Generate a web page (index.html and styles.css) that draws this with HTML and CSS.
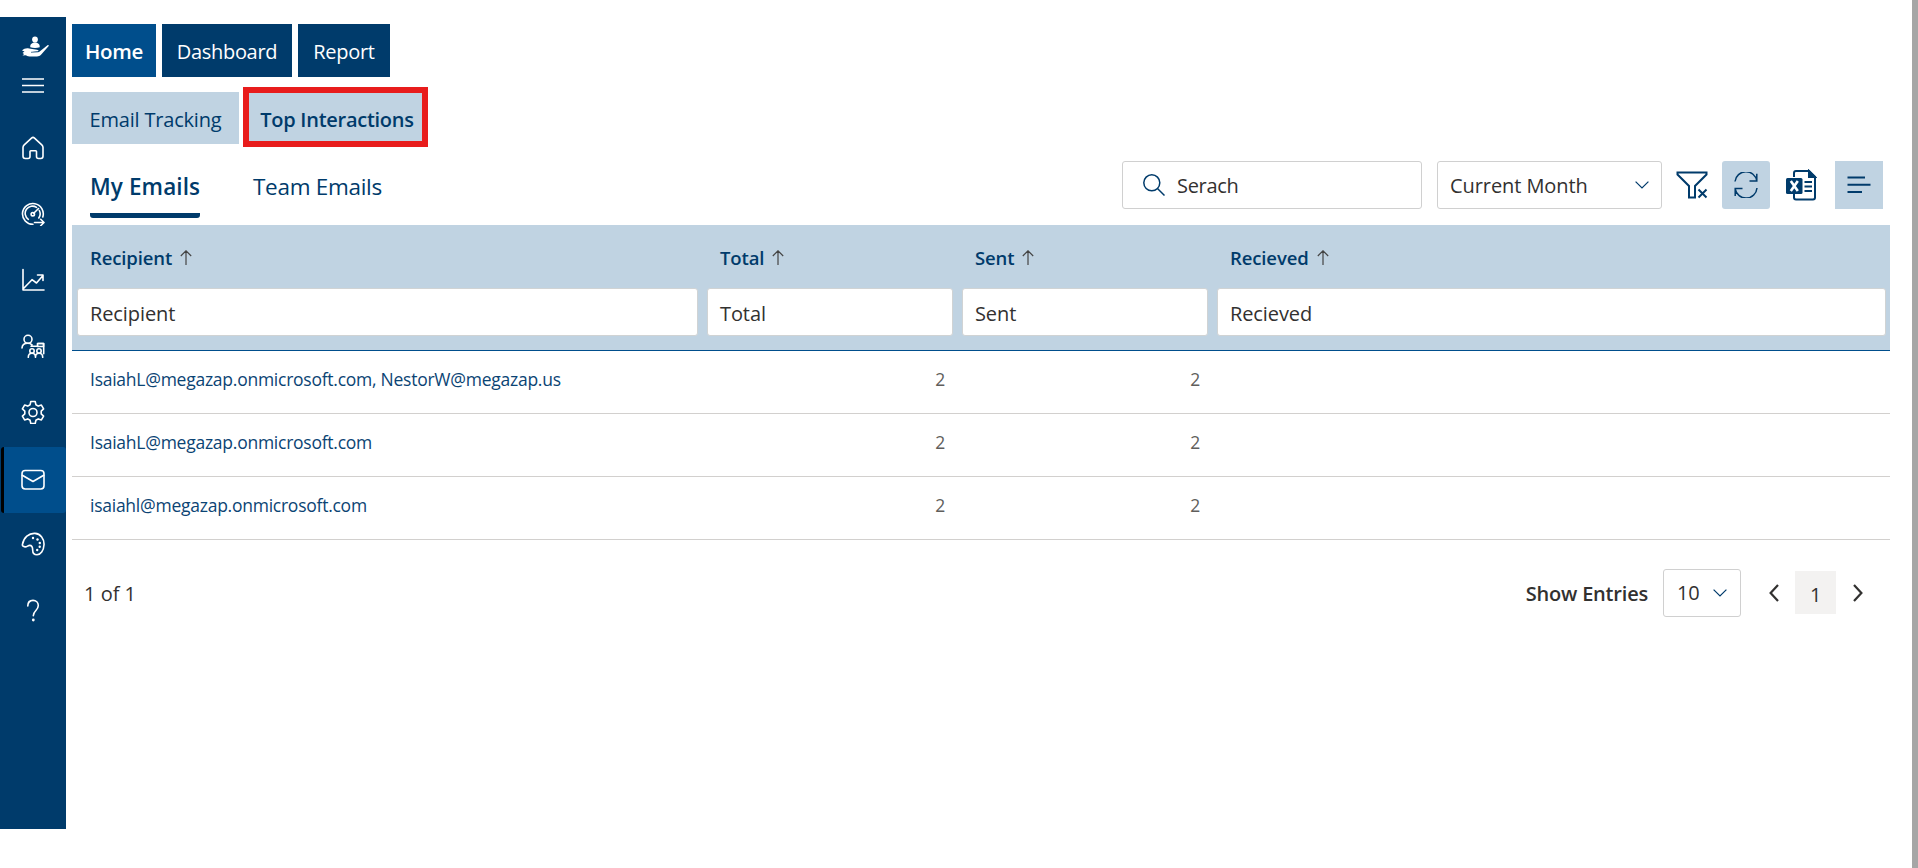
FILE: index.html
```
<!DOCTYPE html>
<html lang="en">
<head>
<meta charset="utf-8">
<title>Top Interactions</title>
<link rel="stylesheet" href="styles.css">
</head>
<body>
<div class="app">
  <aside class="sidebar">
    <div class="logo">
      <svg width="28" height="22" viewBox="0 0 28 22" fill="#fff"><circle cx="14" cy="3.500" r="2.900"/><path d="M9.300 11.200c-.4-3 2-4.600 4.700-4.600s5.100 1.600 4.700 4.600q-4.700 1.400-9.400 0z"/><path d="M1 14.500c2-1.700 4.500-2.600 7-1.900l8 1.100c2 .3 2.100 1.600 0 1.900l-5 .4 7 .1 8.500-6.800c1-.6 1.700.1 1 1L20 18.800c-1 1-2.400 1.600-4 1.600H8.500c-2.200 0-2.600-1-4-1.200L1.500 19.500c2-1.500 1.500-2 0-2.500l2-1.500z"/><path d="M10 16.300l7.500-.5" stroke="#003b6b" stroke-width=".7" fill="none"/></svg>
    </div>
    <button class="menu" aria-label="Menu"><svg width="22" height="15" viewBox="0 0 22 15" stroke="#fff" stroke-width="1.500"><path d="M0 1h22M0 7.500h22M0 14h22"/></svg></button>
    <nav class="nav">
      <a class="nav-item"><svg class="icon" viewBox="0 0 24 24"><path d="M10.500 2.100a2.200 2.200 0 0 1 3 0l7.300 6.800q1.200 1.100 1.200 2.700v8.700q0 2.200-2.200 2.200h-2.300q-2 0-2-2v-5q0-.8-.8-.8H9.800q-.8 0-.8.8v5q0 2-2 2H4.200Q2 22.500 2 20.300v-8.700q0-1.600 1.200-2.700z"/></svg></a>
      <a class="nav-item"><svg class="icon" viewBox="0 0 24 24"><path d="M12 22.300A10.400 10.400 0 1 1 21.800 15M7.300 17.300A7.200 7.200 0 1 1 15.500 5.400M18.300 8.500a7.200 7.200 0 0 1-.5 7.500M17.500 6.500l-5 5"/><circle cx="11.800" cy="12.200" r="1.700"/><path d="M13.500 20.500h9.200M19.700 17.300l3.300 3.200-3.300 3.200"/></svg></a>
      <a class="nav-item"><svg class="icon" viewBox="0 0 24 24"><path d="M2 1.500V22h21M2.500 20.500l8.500-8.800 4.500 3.300L22 7.500M16.500 7H22v5.500"/></svg></a>
      <a class="nav-item"><svg class="icon" viewBox="0 0 24 24"><circle cx="7" cy="5.300" r="4"/><path d="M1 14c.2-3 2.600-4.700 5.800-4.700 1.800 0 3.200.6 4.200 1.600M10 12.200h7M17 9.500h5.700v10.300"/><rect x="16.500" y="9.500" width="6" height="3"/><circle cx="11" cy="17" r="2.200"/><circle cx="18" cy="17" r="2.200"/><path d="M7.300 23.300c0-2.800 1.600-4 3.700-4s3.500 1.300 3.500 4c0-2.700 1.500-4 3.500-4s3.700 1.200 3.700 4"/></svg></a>
      <a class="nav-item"><svg class="icon" viewBox="0 0 24 24"><path d="M9.800 1.500h4.400l.7 3.200 2.400 1.400 3.100-1 2.200 3.800-2.400 2.200v2.800l2.400 2.200-2.200 3.800-3.100-1-2.400 1.400-.7 3.200H9.800l-.7-3.200-2.400-1.400-3.100 1-2.200-3.800 2.400-2.200v-2.800L1.400 8.900l2.200-3.800 3.100 1 2.400-1.400z"/><circle cx="12" cy="12.500" r="4"/></svg></a>
      <a class="nav-item nav-item-active"><svg class="icon" viewBox="0 0 24 24"><rect x="1" y="2.500" width="22" height="18.500" rx="3.200"/><path d="M1.300 7.300L12 13.500l10.700-6.200"/></svg></a>
      <a class="nav-item"><svg class="icon" viewBox="0 0 24 24"><path d="M1.400 12.700C2.500 5.500 8 1 14 1.400c5.500.4 9.300 5.200 9 11.400-.3 6-3.500 10-7 10-3.300 0-4.300-2-4.300-4.600 0-3-.7-4.800-3-4.800-1.800 0-2.700 1.700-4.700 1.500-1.700-.1-2.700-1-2.600-2.200z"/><g fill="#fff" stroke="none"><circle cx="12" cy="6" r="1.200"/><circle cx="16.500" cy="7.500" r="1.200"/><circle cx="18.800" cy="11" r="1.200"/><circle cx="18.700" cy="14.800" r="1.200"/><circle cx="16.200" cy="18" r="1.200"/></g></svg></a>
      <a class="nav-item"><svg class="icon" viewBox="0 0 24 24"><path d="M6.800 8C6.800 4.500 9 2.400 12 2.400s5.300 2 5.300 5.200c0 4.800-5 5-5 10.200"/><circle cx="12.300" cy="22" r="1.400" fill="#fff" stroke="none"/></svg></a>
    </nav>
  </aside>

  <main class="main">
    <nav class="tabs">
      <a class="tab tab-home">Home</a>
      <a class="tab tab-dashboard">Dashboard</a>
      <a class="tab tab-report">Report</a>
    </nav>

    <nav class="subtabs">
      <a class="subtab subtab-tracking">Email Tracking</a>
      <a class="subtab subtab-top">Top Interactions</a>
    </nav>

    <div class="toolbar">
      <div class="views">
        <a class="view view-active">My Emails</a>
        <a class="view">Team Emails</a>
      </div>
      <div class="tools">
        <label class="search">
          <svg width="22" height="22" viewBox="0 0 22 22" class="line"><circle cx="8.800" cy="8.800" r="8"/><path d="M14.500 14.500l7 7"/></svg>
          <span class="placeholder">Serach</span>
        </label>
        <div class="select month"><span>Current Month</span><svg width="14" height="8" viewBox="0 0 14 8" class="line chevron"><path d="M.6.600L7 7 13.400.6"/></svg></div>
        <button class="tool clear" aria-label="Clear filter"><svg width="32" height="28" viewBox="0 0 32 28" fill="none" stroke="#003b6b" stroke-width="2"><path d="M1.500 1.500h29v2L19 15v11.500h-6V15L1.500 3.500z"/><path d="M22.500 18.500l8 8M30.500 18.500l-8 8"/></svg></button>
        <button class="tool tinted rounded" aria-label="Refresh"><svg width="26" height="26" viewBox="0 0 26 26" class="line"><path d="M2 9.500A11 11 0 0 1 23.800 9M23.800 1.800V9h-7.300M24 16A11 11 0 0 1 2.200 17M2.200 24v-7.500h7.300"/></svg></button>
        <button class="tool excel" aria-label="Export to Excel"><svg width="32" height="32" viewBox="0 0 32 32" fill="none" stroke="#003b6b" stroke-width="2"><path d="M9 8V4q0-2 2-2h13l6 6v20.500q0 2-2 2H11q-2 0-2-2V25M24 2v6h6"/><path d="M24 2l6 6h-6z" fill="#003b6b"/><path d="M19.500 13H27M19.500 17.500H27M19.500 22H27"/><rect x="1" y="9" width="16.500" height="16" rx="1.500" fill="#003b6b" stroke="none"/><path d="M5.800 12l7 10M12.800 12l-7 10" stroke="#fff" stroke-width="2.600"/></svg></button>
        <button class="tool tinted" aria-label="List view"><svg width="24" height="18" viewBox="0 0 24 18" class="line bars"><path d="M.5 1.500h17.500M.5 8.700h23M.5 15.900h14.500"/></svg></button>
      </div>
    </div>

    <table class="grid">
      <colgroup><col class="col-recipient"><col class="col-count"><col class="col-count"><col></colgroup>
      <thead>
        <tr class="titles">
          <th><div class="title">Recipient<svg class="sort" viewBox="0 0 12 15"><path d="M6 15V1M.8 6L6 .8 11.200 6"/></svg></div></th>
          <th><div class="title">Total<svg class="sort" viewBox="0 0 12 15"><path d="M6 15V1M.8 6L6 .8 11.200 6"/></svg></div></th>
          <th><div class="title">Sent<svg class="sort" viewBox="0 0 12 15"><path d="M6 15V1M.8 6L6 .8 11.200 6"/></svg></div></th>
          <th><div class="title">Recieved<svg class="sort" viewBox="0 0 12 15"><path d="M6 15V1M.8 6L6 .8 11.200 6"/></svg></div></th>
        </tr>
        <tr class="filters">
          <th><div class="filter">Recipient</div></th>
          <th><div class="filter">Total</div></th>
          <th><div class="filter">Sent</div></th>
          <th><div class="filter">Recieved</div></th>
        </tr>
      </thead>
      <tbody>
        <tr><td>IsaiahL@megazap.onmicrosoft.com, NestorW@megazap.us</td><td class="num">2</td><td class="num">2</td><td></td></tr>
        <tr><td>IsaiahL@megazap.onmicrosoft.com</td><td class="num">2</td><td class="num">2</td><td></td></tr>
        <tr><td>isaiahl@megazap.onmicrosoft.com</td><td class="num">2</td><td class="num">2</td><td></td></tr>
      </tbody>
    </table>

    <footer class="pager">
      <span class="count">1 of 1</span>
      <div class="paging">
        <span class="entries">Show Entries</span>
        <div class="select size"><span>10</span><svg width="14" height="8" viewBox="0 0 14 8" class="line chevron"><path d="M.6.600L7 7 13.400.6"/></svg></div>
        <svg class="arrow" viewBox="0 0 10 18"><path d="M9 1L1.600 9 9 17"/></svg>
        <span class="page">1</span>
        <svg class="arrow" viewBox="0 0 10 18"><path d="M1 1l7.400 8L1 17"/></svg>
      </div>
    </footer>
  </main>
  <div class="edge"></div>
</div>
</body>
</html>
```
FILE: styles.css
```
* { box-sizing: border-box; }

body {
  margin: 0;
  background: #fff;
  color: #323130;
  font: 20px/28px "Open Sans", "Noto Sans", sans-serif;
  letter-spacing: -0.2px;
}

button { border: 0; padding: 0; background: none; }

.app { display: flex; height: 868px; overflow: hidden; }

/* Sidebar */
.sidebar {
  width: 66px;
  height: 812px;
  margin-top: 17px;
  flex: none;
  background: #003b6b;
}
.logo { height: 44px; padding: 19px 0 0 21px; }
.logo svg, .menu svg { display: block; }
.menu { display: flex; align-items: flex-start; height: 52px; padding: 17px 0 0 22px; }
.nav { padding-top: 2px; }
.nav-item {
  height: 66px;
  display: flex;
  align-items: center;
  justify-content: center;
}
.nav-item-active {
  margin: 2px 0 -2px 1px;
  border-left: 3px solid #000;
  border-radius: 3px;
  background: #004e8c;
}
.nav-item-active .icon { margin-left: -4px; }
.icon {
  width: 24px;
  height: 24px;
  fill: none;
  stroke: #fff;
  stroke-width: 1.6;
  stroke-linecap: round;
  stroke-linejoin: round;
}

/* Content column */
.main { flex: 1; margin: 24px 22px 0 6px; }

.tabs { display: flex; gap: 6px; height: 53px; color: #fff; white-space: nowrap; }
.tab {
  display: flex;
  align-items: center;
  justify-content: center;
  padding-top: 2px;
  background: #003b6b;
  letter-spacing: -0.3px;
}
.tab-home {
  width: 84px;
  padding: 0;
  background: #004e8c;
  font-size: 20.5px;
  font-weight: 600;
  letter-spacing: -0.3px;
}
.tab-dashboard { width: 130px; }
.tab-report { width: 92px; }

.subtabs { display: flex; gap: 4px; margin-top: 10px; color: #003b6b; white-space: nowrap; }
.subtab {
  display: flex;
  align-items: center;
  justify-content: center;
  height: 52px;
  margin-top: 5px;
  padding-top: 4px;
  background: #c0d3e2;
}
.subtab-tracking { width: 167px; }
.subtab-top {
  width: 185px;
  height: 60px;
  margin-top: 0;
  padding: 5px 0 0 3px;
  border: 6px solid #e81c1c;
  font-weight: 600;
  letter-spacing: -0.27px;
}

/* Toolbar */
.toolbar { display: flex; justify-content: space-between; height: 78px; }
.views { display: flex; gap: 53px; padding-left: 18px; color: #003b6b; font-size: 22.5px; }
.view { height: 71px; padding-top: 26px; letter-spacing: -0.3px; }
.view-active {
  width: 110px;
  font-weight: 600;
  letter-spacing: 0.1px;
  white-space: nowrap;
  background: linear-gradient(#003b6b, #003b6b) bottom / 100% 5px no-repeat;
  border-radius: 0 0 3px 3px;
}
.tools { display: flex; height: 48px; margin: 14px 7px 0 0; }
.search, .select {
  display: flex;
  align-items: center;
  height: 48px;
  border: 1px solid #d0d0d0;
  border-radius: 3px;
}
.search { width: 300px; padding-left: 20px; gap: 12px; }
.search span, .select span { padding-top: 1px; }
.placeholder { letter-spacing: -0.3px; }
.month {
  width: 225px;
  margin-left: 15px;
  padding: 0 12px;
  justify-content: space-between;
  letter-spacing: -0.08px;
}
.line { fill: none; stroke: #003b6b; stroke-width: 1.5; }
.chevron { stroke-width: 1.2; }
.bars { stroke-width: 2; }
.tool {
  width: 48px;
  height: 48px;
  display: flex;
  align-items: center;
  justify-content: center;
}
.clear { margin: 0 6px; }
.tinted { background: #c0d3e2; }
.rounded { border-radius: 3px; }
.tool.excel { width: 65px; padding-right: 4px; }

/* Data grid */
.grid { width: 1818px; border-collapse: collapse; table-layout: fixed; }
.col-recipient { width: 630px; }
.col-count { width: 255px; }
.grid thead { background: #c0d3e2; }
.grid th { padding: 0; text-align: left; }
.titles { height: 63px; }
.title {
  display: flex;
  align-items: center;
  gap: 8px;
  padding: 2px 0 0 18px;
  color: #003b6b;
  font-size: 18.5px;
  font-weight: 600;
  letter-spacing: -0.12px;
}
.sort { width: 12px; height: 15px; fill: none; stroke: #444; stroke-width: 1.2; }
.filters { height: 62px; border-bottom: 1px solid #004e8c; vertical-align: top; }
.filter {
  height: 48px;
  margin: 0 4px 0 5px;
  padding: 11px 11px 0 12px;
  border: 1px solid #d0d3d4;
  border-radius: 3px;
  background: #fff;
  font-weight: 400;
  letter-spacing: -0.1px;
}
.grid tbody tr { height: 63px; border-bottom: 1px solid #d2d0ce; }
.grid td {
  padding: 0 12px 6px 18px;
  color: #0b4474;
  font-size: 17.5px;
  letter-spacing: -0.25px;
}
.grid td.num { color: #605e5c; text-align: right; }

/* Pager */
.pager {
  display: flex;
  align-items: center;
  justify-content: space-between;
  height: 48px;
  margin-top: 29px;
  padding: 0 27px 0 12px;
}
.count { padding-top: 3px; letter-spacing: 0; }
.paging { display: flex; align-items: center; }
.entries { padding-top: 3px; margin-right: 15px; font-weight: 600; }
.size { width: 78px; padding: 0 13px; justify-content: space-between; }
.arrow { width: 10px; height: 18px; fill: none; stroke: #323130; stroke-width: 2.2; }
.size + .arrow { margin-left: 28px; }
.page {
  width: 41px;
  height: 43px;
  margin: 0 17px 0 16px;
  padding-top: 10px;
  background: #f3f2f1;
  text-align: center;
}

.edge { width: 6px; flex: none; background: #a6a6a6; }
```
